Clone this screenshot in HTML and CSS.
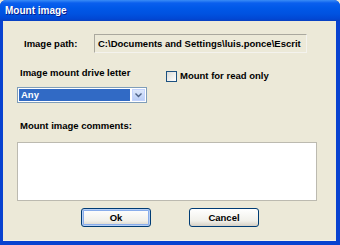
FILE: index.html
```html
<!DOCTYPE html>
<html lang="en">
<head>
  <meta charset="UTF-8">
  <title>Mount image</title>
  <link rel="stylesheet" href="styles.css">
</head>
<body>
  <div class="window">
    <div class="titlebar">Mount image</div>
    <div class="content">
      <div class="path-row">
        <span class="label path-label">Image path:</span>
        <div class="path-box">C:\Documents and Settings\luis.ponce\Escrit</div>
      </div>

      <div class="drive-row">
        <div class="drive-col">
          <span class="label">Image mount drive letter</span>
          <div class="select">
            <span class="select-value">Any</span>
            <span class="select-btn">
              <svg width="7" height="5" viewBox="0 0 7 5"><path d="M0.5 0.5 L3.5 3.5 L6.5 0.5" fill="none" stroke="#4d6185" stroke-width="1.4"/></svg>
            </span>
          </div>
        </div>
        <label class="check">
          <span class="check-box"></span>
          <span class="label">Mount for read only</span>
        </label>
      </div>

      <span class="label comments-label">Mount image comments:</span>
      <div class="comments"></div>

      <div class="buttons">
        <button class="btn btn-default">Ok</button>
        <button class="btn">Cancel</button>
      </div>
    </div>
  </div>
</body>
</html>
```

FILE: styles.css
```css
body {
  margin: 0;
  padding: 0;
  background: #ece9d8;
  font-family: "Liberation Sans", Arial, sans-serif;
}
.window {
  width: 340px;
  height: 245px;
  box-sizing: border-box;
  display: flex;
  flex-direction: column;
  background: #0842d0;
  border-radius: 6px 6px 0 0;
  overflow: hidden;
}
.titlebar {
  height: 21px;
  flex: none;
  padding-left: 5px;
  line-height: 22px;
  color: #fff;
  font-size: 10px;
  font-weight: bold;
  text-shadow: 1px 1px 0 #0a1e8c;
  background: linear-gradient(#3a8cf6 0, #0a5fee 3px, #0058e8 8px, #0052e0 14px, #0147d3 19px, #0a3fbf 21px);
}
.content {
  flex: 1;
  margin: 0 4px 4px 3px;
  background: #ece9d8;
  padding: 0 0 0 14px;
  border-bottom: 1px solid #f4f2e8;
}
.label {
  font-size: 9.5px;
  line-height: 12px;
  font-weight: bold;
  color: #000;
  white-space: nowrap;
}
.path-row {
  display: flex;
  align-items: center;
  margin-top: 13px;
}
.path-label {
  width: 70px;
  padding-left: 7px;
}
.path-box {
  width: 213px;
  height: 19px;
  box-sizing: border-box;
  border: 1px solid #aaa89e;
  border-right-color: #f4f3ee;
  border-bottom-color: #f4f3ee;
  padding-left: 3px;
  font-size: 9.5px;
  font-weight: bold;
  line-height: 17px;
  white-space: nowrap;
  overflow: hidden;
}
.drive-row {
  display: flex;
  align-items: flex-start;
  margin-top: 14px;
}
.drive-col {
  display: flex;
  flex-direction: column;
}
.drive-col .label {
  padding-left: 3px;
}
.select {
  margin-top: 8px;
  width: 130px;
  height: 16px;
  box-sizing: border-box;
  border: 1px solid #7f9db9;
  background: #fff;
  display: flex;
  padding: 1px;
}
.select-value {
  flex: 1;
  background: #316ac5;
  color: #fff;
  font-size: 9.5px;
  font-weight: bold;
  line-height: 12px;
  padding-left: 2px;
}
.select-btn {
  width: 13px;
  margin-left: 2px;
  background: linear-gradient(#dce7fb, #b9cdf6);
  border: 1px solid #c3d3fd;
  box-sizing: border-box;
  display: flex;
  align-items: center;
  justify-content: center;
}
.check {
  display: flex;
  align-items: center;
  margin: 3px 0 0 19px;
  gap: 3px;
}
.check-box {
  width: 9px;
  height: 9px;
  border: 1px solid #1c5180;
  background: linear-gradient(135deg, #dcdcd6, #fff);
}
.comments-label {
  display: block;
  margin-top: 17px;
  padding-left: 3px;
}
.comments {
  margin-top: 10px;
  width: 300px;
  height: 59px;
  box-sizing: border-box;
  border: 1px solid #bcbab0;
  background: #fff;
}
.buttons {
  display: flex;
  gap: 38px;
  margin: 7px 0 0 64px;
}
.btn {
  width: 70px;
  height: 19px;
  padding: 0;
  font-family: inherit;
  font-size: 9.5px;
  font-weight: bold;
  color: #000;
  border: 1px solid #003c74;
  border-radius: 3px;
  background: linear-gradient(#fff, #f1f0ea 70%, #d6d0c5);
}
.btn-default {
  box-shadow: inset 0 0 0 1px #b8d0f5, inset 0 0 0 2px #89adeb;
}
```
